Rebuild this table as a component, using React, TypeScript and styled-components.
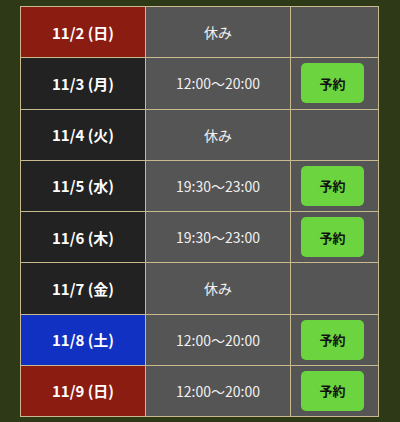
import React from "react";
import styled, { createGlobalStyle } from "styled-components";

const Global = createGlobalStyle`
  html, body { margin: 0; padding: 0; background: #2e3a17; }
  body { font-family: "Noto Sans CJK JP", "Noto Sans", sans-serif; }
`;

const Page = styled.div`
  padding: 6px 20px 0 20px;
  height: 422px;
  box-sizing: border-box;
  overflow: hidden;
`;

const Table = styled.table`
  width: 359px;
  border-collapse: collapse;
  table-layout: fixed;
`;

type DayKind = "sun" | "sat" | "week";

const DateCell = styled.td<{ $kind: DayKind }>`
  width: 124px;
  height: 50.25px;
  padding: 0;
  border: 1px solid #c9b98e;
  text-align: center;
  vertical-align: middle;
  color: #ffffff;
  font-weight: 700;
  font-size: 15px;
  background: ${(p) =>
    p.$kind === "sun" ? "#8b1c12" : p.$kind === "sat" ? "#1131c3" : "#222222"};
`;

const TimeCell = styled.td`
  width: 144px;
  padding: 0;
  border: 1px solid #c9b98e;
  text-align: center;
  vertical-align: middle;
  background: #555555;
  color: #f0f0f0;
  font-size: 14px;
`;

const ActionCell = styled.td`
  padding: 0 4px 0 0;
  border: 1px solid #c9b98e;
  background: #555555;
  text-align: center;
  vertical-align: middle;
`;

const ReserveButton = styled.button`
  width: 63px;
  height: 40px;
  border: none;
  border-radius: 5px;
  background: #6bd43e;
  color: #111111;
  font-family: "Noto Sans CJK JP", sans-serif;
  font-weight: 700;
  font-size: 13px;
  padding: 0;
  cursor: pointer;
`;

const rows: { date: string; kind: DayKind; time: string | null }[] = [
  { date: "11/2 (日)", kind: "sun", time: null },
  { date: "11/3 (月)", kind: "week", time: "12:00〜20:00" },
  { date: "11/4 (火)", kind: "week", time: null },
  { date: "11/5 (水)", kind: "week", time: "19:30〜23:00" },
  { date: "11/6 (木)", kind: "week", time: "19:30〜23:00" },
  { date: "11/7 (金)", kind: "week", time: null },
  { date: "11/8 (土)", kind: "sat", time: "12:00〜20:00" },
  { date: "11/9 (日)", kind: "sun", time: "12:00〜20:00" },
];

export default function App() {
  return (
    <>
      <Global />
      <Page>
        <Table>
          <tbody>
            {rows.map((r) => (
              <tr key={r.date}>
                <DateCell $kind={r.kind}>{r.date}</DateCell>
                <TimeCell>{r.time ?? "休み"}</TimeCell>
                <ActionCell>
                  {r.time && <ReserveButton>予約</ReserveButton>}
                </ActionCell>
              </tr>
            ))}
          </tbody>
        </Table>
      </Page>
    </>
  );
}
